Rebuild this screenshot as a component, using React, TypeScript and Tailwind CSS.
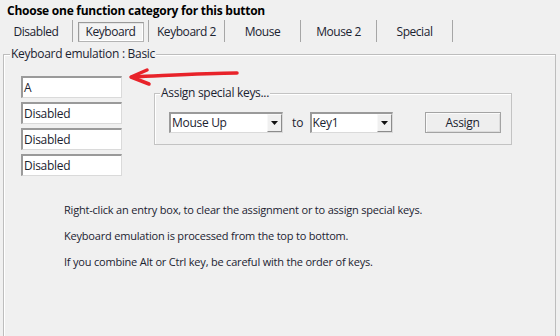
import React from "react";

const font = { fontFamily: '"Open Sans", "Noto Sans", sans-serif' };

function Sunken({ w, children }: { w: string; children: React.ReactNode }) {
  return (
    <div
      className={`${w} h-[22px] bg-white border-t-2 border-l-2 border-r border-b border-t-[#9a9a9a] border-l-[#9a9a9a] border-r-[#dadada] border-b-[#dadada] flex items-center pl-[1px] text-[12px] text-[#1b2330] tracking-[-0.3px]`}
    >
      {children}
    </div>
  );
}

function Combo({ w, value }: { w: string; value: string }) {
  return (
    <div
      className={`${w} h-[21px] bg-white border-t-2 border-l-2 border-r border-b border-t-[#9a9a9a] border-l-[#9a9a9a] border-r-[#dadada] border-b-[#dadada] flex items-stretch text-[12px] text-[#1b2330] tracking-[-0.3px]`}
    >
      <div className="flex-1 flex items-center pl-[1px]">{value}</div>
      <div className="w-[15px] bg-[#f0f0f0] border-l border-t border-l-[#f8f8f8] border-t-[#f8f8f8] border-r border-b border-r-[#8c8c8c] border-b-[#8c8c8c] flex items-center justify-center">
        <svg width="7" height="4" viewBox="0 0 7 4">
          <path d="M0 0 H7 L3.5 4 Z" fill="#111" />
        </svg>
      </div>
    </div>
  );
}

export default function App() {
  const tabs = ["Disabled", "Keyboard", "Keyboard 2", "Mouse", "Mouse 2", "Special"];
  return (
    <div
      className="w-[560px] h-[336px] bg-[#f0f0f0] overflow-hidden flex flex-col relative text-[#1b2330]"
      style={font}
    >
      <div className="pl-[7px] pt-[2px] text-[12px] font-bold leading-[17px] text-black tracking-[-0.25px]">
        Choose one function category for this button
      </div>
      <div className="flex h-[22px] mt-[1px]">
        {tabs.map((t, i) => (
          <div
            key={t}
            className={`${i === 0 ? "w-[73px]" : "w-[76px]"} h-[22px] border-r border-r-[#a6a6a6] flex items-center justify-center text-[12px] tracking-[-0.45px] pt-[1px]`}
          >
            {i === 1 ? (
              <div className="w-[66px] h-[20px] mt-[1px] border border-t-[#9a9a9a] border-l-[#9a9a9a] border-r-[#b4b4b4] border-b-[#b4b4b4] bg-[#f4f4f4] shadow-[inset_1px_1px_0_#e4e4e4,inset_-1px_-1px_0_#ffffff] flex items-center justify-center">
                {t}
              </div>
            ) : (
              t
            )}
          </div>
        ))}
      </div>
      <div className="ml-[3px] w-[553px] mt-[12px] flex-1 border border-b-0 border-[#bdbdbd] relative shadow-[inset_1px_1px_0_#ffffff]">
        <div className="absolute -top-[9px] left-[6px] px-[1px] bg-[#f0f0f0] text-[12px] leading-[16px] tracking-[-0.3px]">
          Keyboard emulation : Basic
        </div>
        <div className="flex pl-[17px] pt-[21px]">
          <div className="flex flex-col gap-[4px]">
            <Sunken w="w-[101px]">A</Sunken>
            <Sunken w="w-[101px]">Disabled</Sunken>
            <Sunken w="w-[101px]">Disabled</Sunken>
            <Sunken w="w-[101px]">Disabled</Sunken>
          </div>
          <div className="ml-[32px] mt-[17px] w-[358px] h-[52px] border border-[#c3c3c3] relative shadow-[inset_1px_1px_0_#ffffff]">
            <div className="absolute -top-[9px] left-[5px] px-[1px] bg-[#f0f0f0] text-[12px] leading-[16px] tracking-[-0.3px]">
              Assign special keys...
            </div>
            <div className="flex items-center pl-[14px] pt-[18px]">
              <Combo w="w-[114px]" value="Mouse Up" />
              <span className="ml-[9px] mr-[6px] text-[12px]">to</span>
              <Combo w="w-[83px]" value="Key1" />
              <div className="ml-[32px] w-[76px] h-[21px] border border-[#a3a3a3] bg-[#eeeeee] shadow-[inset_1px_1px_0_#fafafa,inset_-1px_-1px_0_#dcdcdc] flex items-center justify-center text-[12px] tracking-[-0.3px]">
                Assign
              </div>
            </div>
          </div>
        </div>
        <div className="pl-[60px] mt-[26px] flex flex-col gap-[10px] text-[11px] leading-[16px] tracking-[-0.2px]">
          <div>Right-click an entry box, to clear the assignment or to assign special keys.</div>
          <div>Keyboard emulation is processed from the top to bottom.</div>
          <div>If you combine Alt or Ctrl key, be careful with the order of keys.</div>
        </div>
      </div>
      <svg
        className="absolute left-[126px] top-[64px]"
        width="116"
        height="26"
        viewBox="0 0 116 26"
      >
        <path
          d="M111 9 C 80 9, 50 11, 6 13"
          stroke="#e8232a"
          strokeWidth="3.5"
          fill="none"
          strokeLinecap="round"
        />
        <path
          d="M21 6 L5 13 L23 20"
          stroke="#e8232a"
          strokeWidth="3.5"
          fill="none"
          strokeLinecap="round"
          strokeLinejoin="round"
        />
      </svg>
    </div>
  );
}
